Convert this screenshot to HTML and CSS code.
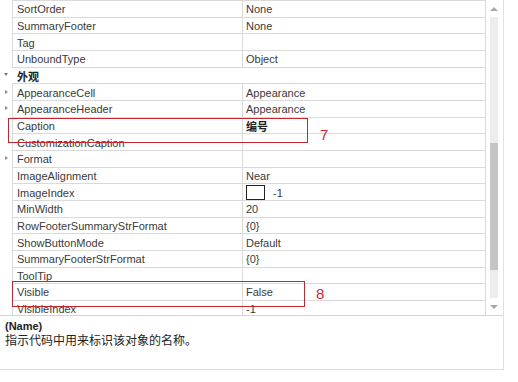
FILE: index.html
```html
<!DOCTYPE html>
<html lang="zh-CN">
<head>
    <meta charset="UTF-8">
    <title>属性</title>
    <link rel="stylesheet" href="styles.css">
</head>
<body>
    <div class="panel">
        <div class="main">
            <div class="rows">
                <div class="row"><span class="exp"></span><div class="name">SortOrder</div><div class="val">None</div></div>
                <div class="row"><span class="exp"></span><div class="name">SummaryFooter</div><div class="val">None</div></div>
                <div class="row"><span class="exp"></span><div class="name">Tag</div><div class="val"></div></div>
                <div class="row"><span class="exp"></span><div class="name">UnboundType</div><div class="val">Object</div></div>
                <div class="row group"><span class="exp"><i class="tri-down"></i></span><div class="name">外观</div></div>
                <div class="row"><span class="exp"><i class="tri-right"></i></span><div class="name">AppearanceCell</div><div class="val">Appearance</div></div>
                <div class="row"><span class="exp"><i class="tri-right"></i></span><div class="name">AppearanceHeader</div><div class="val">Appearance</div></div>
                <div class="row"><span class="exp"></span><div class="name">Caption</div><div class="val bold">编号</div></div>
                <div class="row"><span class="exp"></span><div class="name">CustomizationCaption</div><div class="val"></div></div>
                <div class="row"><span class="exp"><i class="tri-right"></i></span><div class="name">Format</div><div class="val"></div></div>
                <div class="row"><span class="exp"></span><div class="name">ImageAlignment</div><div class="val">Near</div></div>
                <div class="row"><span class="exp"></span><div class="name">ImageIndex</div><div class="val"><span class="swatch"></span>-1</div></div>
                <div class="row"><span class="exp"></span><div class="name">MinWidth</div><div class="val">20</div></div>
                <div class="row"><span class="exp"></span><div class="name">RowFooterSummaryStrFormat</div><div class="val">{0}</div></div>
                <div class="row"><span class="exp"></span><div class="name">ShowButtonMode</div><div class="val">Default</div></div>
                <div class="row"><span class="exp"></span><div class="name">SummaryFooterStrFormat</div><div class="val">{0}</div></div>
                <div class="row"><span class="exp"></span><div class="name">ToolTip</div><div class="val"></div></div>
                <div class="row"><span class="exp"></span><div class="name">Visible</div><div class="val">False</div></div>
                <div class="row"><span class="exp"></span><div class="name">VisibleIndex</div><div class="val">-1</div></div>
            </div>
            <div class="scrollbar">
                <div class="arrow"><i class="tri-up"></i></div>
                <div class="track">
                    <div class="thumb"></div>
                </div>
                <div class="arrow"><i class="tri-down gray"></i></div>
            </div>
        </div>
        <div class="desc">
            <div class="desc-title">(Name)</div>
            <div class="desc-text">指示代码中用来标识该对象的名称。</div>
        </div>

        <!-- annotations -->
        <div class="mark mark-caption"></div>
        <div class="mark-num num-7">7</div>
        <div class="mark mark-visible"></div>
        <div class="mark-num num-8">8</div>
    </div>
</body>
</html>
```

FILE: styles.css
```css
body {
    margin: 0;
    background: #ffffff;
    font-family: "Liberation Sans", "Noto Sans CJK SC", sans-serif;
    font-size: 11px;
    color: #3a3a3a;
}
.panel {
    position: relative;
    width: 504px;
    border-right: 1px solid #e2e2e2;
    box-sizing: border-box;
}
.main {
    display: flex;
    height: 315px;
    overflow: hidden;
}
.rows {
    width: 486px;
    flex: none;
}
.row {
    display: flex;
    height: 16.667px;
}
.exp {
    width: 12px;
    flex: none;
    display: flex;
    align-items: center;
    justify-content: center;
}
.name,
.val {
    display: flex;
    align-items: center;
    white-space: nowrap;
    overflow: hidden;
    box-sizing: border-box;
    border-top: 1px solid #dadada;
    padding-top: 1px;
}
.name {
    width: 230px;
    flex: none;
    border-left: 1px solid #dadada;
    padding-left: 4px;
}
.val {
    flex: 1;
    border-left: 1px solid #dadada;
    border-right: 1px solid #dadada;
    padding-left: 3px;
}
.bold {
    font-weight: bold;
    color: #222;
}
.group .name {
    flex: 1;
    border-left: none;
    border-right: 1px solid #dadada;
    padding-left: 5px;
    font-weight: bold;
    color: #222;
}
.swatch {
    width: 17px;
    height: 13px;
    border: 1px solid #222;
    background: #fff;
    margin-right: 8px;
}
.tri-right {
    width: 0;
    height: 0;
    border-left: 3px solid #8a8a8a;
    border-top: 2.5px solid transparent;
    border-bottom: 2.5px solid transparent;
}
.tri-down {
    width: 0;
    height: 0;
    border-top: 3px solid #777;
    border-left: 2.5px solid transparent;
    border-right: 2.5px solid transparent;
}
.tri-up {
    width: 0;
    height: 0;
    border-bottom: 4px solid #a8a8a8;
    border-left: 4px solid transparent;
    border-right: 4px solid transparent;
}
.tri-down.gray {
    border-top: 4px solid #a8a8a8;
    border-left-width: 4px;
    border-right-width: 4px;
}
.scrollbar {
    display: flex;
    flex-direction: column;
    margin-left: 4px;
    width: 8px;
}
.arrow {
    height: 17px;
    flex: none;
    display: flex;
    align-items: center;
    justify-content: center;
}
.track {
    height: 281px;
    flex: none;
    background: #ededed;
    padding-top: 126px;
    box-sizing: border-box;
}
.thumb {
    height: 127px;
    background: #c5c5c5;
}
.desc {
    height: 55px;
    border-top: 1px solid #d4d4d4;
    border-bottom: 1px solid #dcdcdc;
    padding: 3px 5px 0;
    box-sizing: border-box;
}
.desc-title {
    font-weight: bold;
    color: #222;
    line-height: 14px;
}
.desc-text {
    font-size: 12px;
    line-height: 16px;
    color: #222;
}
.mark {
    position: absolute;
    border: 1px solid #c0282e;
    box-sizing: border-box;
}
.mark-caption {
    left: 8px;
    top: 118px;
    width: 300px;
    height: 25px;
}
.mark-visible {
    left: 12px;
    top: 281px;
    width: 293px;
    height: 26px;
}
.mark-num {
    position: absolute;
    font-size: 15px;
    line-height: 15px;
    color: #d42a2f;
}
.num-7 {
    left: 320px;
    top: 127px;
}
.num-8 {
    left: 316px;
    top: 286px;
}
```
